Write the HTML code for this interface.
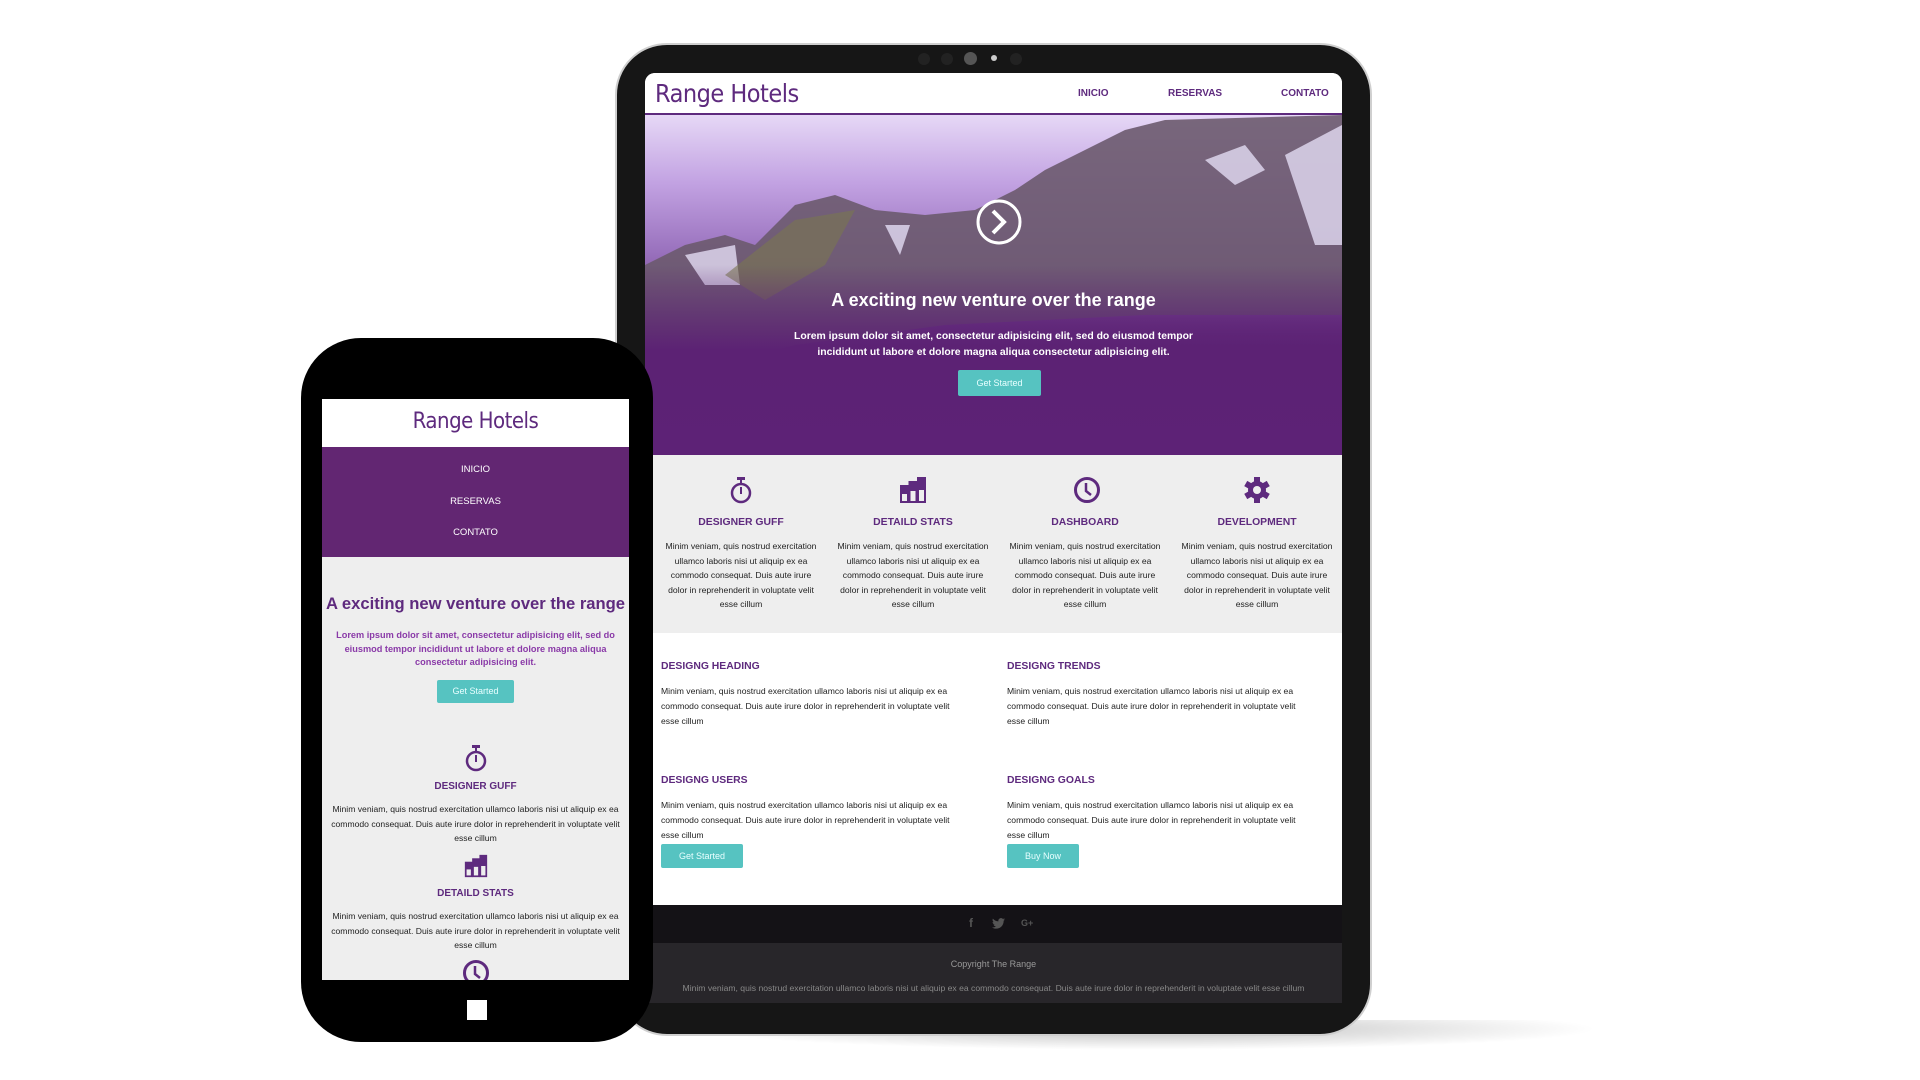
<!DOCTYPE html>
<html><head><meta charset="utf-8"><style>
*{margin:0;padding:0;box-sizing:border-box}
body{width:1920px;height:1080px;background:#fff;position:relative;overflow:hidden;font-family:"Liberation Sans",sans-serif}
.a{position:absolute}
.c{text-align:center}
.p{color:#5e2a7e}
.t{font-size:8.6px;line-height:14.6px;color:#222}
.btn{position:absolute;background:#56c3c1;color:#e8ffff;font-size:9px;text-align:center;border-radius:2px}
.logo{font-family:"Liberation Sans Narrow","DejaVu Sans Condensed","Liberation Sans",sans-serif;color:#5e2a7e;letter-spacing:-0.5px}
</style></head><body>
<div class="a" style="left:700px;top:1020px;width:900px;height:30px;background:radial-gradient(ellipse at 50% 30%,rgba(0,0,0,0.25),rgba(0,0,0,0) 70%)"></div>
<div class="a" style="left:615px;top:43px;width:757px;height:993px;background:#161616;border-radius:52px;border:2px solid #cfcfcf"></div>
<div class="a" style="left:918px;top:53px;width:12px;height:12px;border-radius:6px;background:#222"></div>
<div class="a" style="left:941px;top:53px;width:12px;height:12px;border-radius:6px;background:#222"></div>
<div class="a" style="left:964px;top:52px;width:13px;height:13px;border-radius:7px;background:#555"></div>
<div class="a" style="left:991px;top:55px;width:6px;height:6px;border-radius:3px;background:#ccc"></div>
<div class="a" style="left:1010px;top:53px;width:12px;height:12px;border-radius:6px;background:#222"></div>
<div class="a" style="left:645px;top:73px;width:697px;height:930px;background:#fff;border-radius:10px 10px 0 0;overflow:hidden">
  <div class="a" style="left:0;top:0;width:697px;height:42px;background:#fff;border-bottom:2px solid #5e2a7e"></div>
  <div class="a logo" style="left:10px;top:6px;font-size:25px">Range Hotels</div>
  <div class="a p" style="left:433px;top:15px;font-size:10px;font-weight:bold">INICIO</div>
  <div class="a p" style="left:523px;top:15px;font-size:10px;font-weight:bold">RESERVAS</div>
  <div class="a p" style="left:636px;top:15px;font-size:10px;font-weight:bold">CONTATO</div>
  <div class="a" style="left:0;top:42px;width:697px;height:340px;background:linear-gradient(180deg,#e6d8f6 0%,#c2a2e2 20%,#9a72be 40%,#5a1f72 72%,#5e2378 100%);overflow:hidden">
    <svg class="a" style="left:0;top:0" width="697" height="340" viewBox="0 0 697 340">
      <defs><linearGradient id="g" x1="0" y1="0" x2="0" y2="1"><stop offset="0" stop-color="#5c2274" stop-opacity="0"/><stop offset="0.45" stop-color="#5c2274"/><stop offset="1" stop-color="#5d2276"/></linearGradient></defs>
      <path d="M0 150 L40 130 L80 120 L110 130 L150 90 L190 80 L230 95 L280 100 L330 95 L370 75 L400 55 L440 35 L480 15 L520 5 L697 0 L697 200 L500 200 L300 210 L150 230 L40 260 L0 280Z" fill="#6b5a6e" opacity="0.9"/>
      <path d="M40 140 L90 130 L95 170 L60 170Z M240 110 L265 110 L255 140Z M560 45 L600 30 L620 55 L590 70Z M640 40 L697 10 L697 130 L670 130Z" fill="#e4dcf4" opacity="0.8"/>
      <path d="M80 160 L150 105 L210 95 L180 150 L120 185Z" fill="#7a7650" opacity="0.6"/>
      <rect x="0" y="150" width="697" height="190" fill="url(#g)"/>
      <circle cx="354" cy="107" r="21" fill="none" stroke="#fff" stroke-width="3"/>
      <path d="M348 96 L359 107 L348 118" fill="none" stroke="#fff" stroke-width="4"/>
    </svg>
    <div class="a c" style="left:0;top:175px;width:697px;color:#fff;font-size:18px;font-weight:bold">A exciting new venture over the range</div>
    <div class="a c" style="left:0;top:214px;width:697px;color:#fff;font-size:10.4px;font-weight:bold;line-height:16px">Lorem ipsum dolor sit amet, consectetur adipisicing elit, sed do eiusmod tempor<br>incididunt ut labore et dolore magna aliqua consectetur adipisicing elit.</div>
    <div class="btn" style="left:313px;top:255px;width:83px;height:26px;line-height:26px">Get Started</div>
  </div>
  <div class="a" style="left:0;top:382px;width:697px;height:178px;background:#eee"></div>
  <svg class="a" style="left:84px;top:403px" width="24" height="28" viewBox="0 0 24 28"><rect x="8" y="1" width="8" height="3" fill="#5e2a7e"/><rect x="11" y="3" width="2" height="4" fill="#5e2a7e"/><circle cx="12" cy="17" r="9" fill="none" stroke="#5e2a7e" stroke-width="2.5"/><rect x="11" y="11" width="2" height="7" fill="#5e2a7e"/></svg>
  <svg class="a" style="left:255px;top:403px" width="26" height="28" viewBox="0 0 26 28"><rect x="1" y="10" width="7" height="16" fill="none" stroke="#5e2a7e" stroke-width="2"/><rect x="1" y="10" width="7" height="8" fill="#5e2a7e"/><rect x="9.5" y="6" width="7" height="20" fill="none" stroke="#5e2a7e" stroke-width="2"/><rect x="9.5" y="6" width="7" height="9" fill="#5e2a7e"/><rect x="18" y="2" width="7" height="24" fill="none" stroke="#5e2a7e" stroke-width="2"/><rect x="18" y="2" width="7" height="12" fill="#5e2a7e"/></svg>
  <svg class="a" style="left:428px;top:403px" width="28" height="28" viewBox="0 0 28 28"><circle cx="14" cy="14" r="11.5" fill="none" stroke="#5e2a7e" stroke-width="3"/><path d="M13 7 V15 L18 19" fill="none" stroke="#5e2a7e" stroke-width="2.5"/></svg>
  <svg class="a" style="left:598px;top:403px" width="28" height="28" viewBox="0 0 28 28"><g fill="#5e2a7e"><circle cx="14" cy="14" r="9"/><rect x="11" y="1" width="6" height="26"/><rect x="11" y="1" width="6" height="26" transform="rotate(60 14 14)"/><rect x="11" y="1" width="6" height="26" transform="rotate(120 14 14)"/></g><circle cx="14" cy="14" r="4" fill="#eee"/></svg>
  <div class="a c p" style="left:10px;top:444px;width:172px;font-size:10.4px;font-weight:bold">DESIGNER GUFF</div>
  <div class="a c p" style="left:182px;top:444px;width:172px;font-size:10.4px;font-weight:bold">DETAILD STATS</div>
  <div class="a c p" style="left:354px;top:444px;width:172px;font-size:10.4px;font-weight:bold">DASHBOARD</div>
  <div class="a c p" style="left:526px;top:444px;width:172px;font-size:10.4px;font-weight:bold">DEVELOPMENT</div>
  <div class="a c t" style="left:16px;top:466px;width:160px">Minim veniam, quis nostrud exercitation ullamco laboris nisi ut aliquip ex ea commodo consequat. Duis aute irure dolor in reprehenderit in voluptate velit esse cillum</div>
  <div class="a c t" style="left:188px;top:466px;width:160px">Minim veniam, quis nostrud exercitation ullamco laboris nisi ut aliquip ex ea commodo consequat. Duis aute irure dolor in reprehenderit in voluptate velit esse cillum</div>
  <div class="a c t" style="left:360px;top:466px;width:160px">Minim veniam, quis nostrud exercitation ullamco laboris nisi ut aliquip ex ea commodo consequat. Duis aute irure dolor in reprehenderit in voluptate velit esse cillum</div>
  <div class="a c t" style="left:532px;top:466px;width:160px">Minim veniam, quis nostrud exercitation ullamco laboris nisi ut aliquip ex ea commodo consequat. Duis aute irure dolor in reprehenderit in voluptate velit esse cillum</div>
  <div class="a p" style="left:16px;top:588px;font-size:10.4px;font-weight:bold">DESIGNG HEADING</div>
  <div class="a p" style="left:362px;top:588px;font-size:10.4px;font-weight:bold">DESIGNG TRENDS</div>
  <div class="a t" style="left:16px;top:611px;width:298px;line-height:15px">Minim veniam, quis nostrud exercitation ullamco laboris nisi ut aliquip ex ea commodo consequat. Duis aute irure dolor in reprehenderit in voluptate velit esse cillum</div>
  <div class="a t" style="left:362px;top:611px;width:298px;line-height:15px">Minim veniam, quis nostrud exercitation ullamco laboris nisi ut aliquip ex ea commodo consequat. Duis aute irure dolor in reprehenderit in voluptate velit esse cillum</div>
  <div class="a p" style="left:16px;top:702px;font-size:10.4px;font-weight:bold">DESIGNG USERS</div>
  <div class="a p" style="left:362px;top:702px;font-size:10.4px;font-weight:bold">DESIGNG GOALS</div>
  <div class="a t" style="left:16px;top:725px;width:298px;line-height:15px">Minim veniam, quis nostrud exercitation ullamco laboris nisi ut aliquip ex ea commodo consequat. Duis aute irure dolor in reprehenderit in voluptate velit esse cillum</div>
  <div class="a t" style="left:362px;top:725px;width:298px;line-height:15px">Minim veniam, quis nostrud exercitation ullamco laboris nisi ut aliquip ex ea commodo consequat. Duis aute irure dolor in reprehenderit in voluptate velit esse cillum</div>
  <div class="btn" style="left:16px;top:771px;width:82px;height:24px;line-height:24px">Get Started</div>
  <div class="btn" style="left:362px;top:771px;width:72px;height:24px;line-height:24px">Buy Now</div>
  <div class="a" style="left:0;top:832px;width:697px;height:38px;background:#141216"></div>
  <div class="a" style="left:324px;top:843px;color:#555;font-size:12px;font-weight:bold">f</div>
  <svg class="a" style="left:347px;top:845px" width="13" height="11" viewBox="0 0 24 20"><path d="M24 2.3c-.9.4-1.8.7-2.8.8 1-.6 1.8-1.6 2.2-2.7-1 .6-2 1-3.1 1.2C19.3.6 18 0 16.6 0c-2.7 0-4.9 2.2-4.9 4.9 0 .4 0 .8.1 1.1C7.7 5.8 4.1 3.9 1.7.9c-.4.7-.7 1.6-.7 2.5 0 1.7.9 3.2 2.2 4.1-.8 0-1.6-.2-2.2-.6v.1c0 2.4 1.7 4.4 3.9 4.8-.4.1-.8.2-1.3.2-.3 0-.6 0-.9-.1.6 2 2.4 3.4 4.6 3.4-1.7 1.3-3.8 2.1-6.1 2.1-.4 0-.8 0-1.2-.1 2.2 1.4 4.8 2.2 7.5 2.2 9.1 0 14-7.5 14-14v-.6c1-.7 1.8-1.6 2.5-2.5z" fill="#555"/></svg>
  <div class="a" style="left:376px;top:845px;color:#555;font-size:9px;font-weight:bold">G+</div>
  <div class="a" style="left:0;top:870px;width:697px;height:60px;background:#28262a"></div>
  <div class="a c" style="left:0;top:886px;width:697px;color:#999;font-size:9px">Copyright The Range</div>
  <div class="a c" style="left:0;top:910px;width:697px;color:#888;font-size:8.6px;white-space:nowrap">Minim veniam, quis nostrud exercitation ullamco laboris nisi ut aliquip ex ea commodo consequat. Duis aute irure dolor in reprehenderit in voluptate velit esse cillum</div>
</div>
<div class="a" style="left:301px;top:338px;width:352px;height:704px;background:#000;border-radius:60px"></div>
<div class="a" style="left:322px;top:399px;width:307px;height:581px;background:#eee;overflow:hidden">
  <div class="a" style="left:0;top:0;width:307px;height:48px;background:#fff"></div>
  <div class="a c logo" style="left:0;top:10px;width:307px;font-size:22px">Range Hotels</div>
  <div class="a" style="left:0;top:48px;width:307px;height:110px;background:#622672"></div>
  <div class="a c" style="left:0;top:65px;width:307px;color:#fff;font-size:9.5px">INICIO</div>
  <div class="a c" style="left:0;top:97px;width:307px;color:#fff;font-size:9.5px">RESERVAS</div>
  <div class="a c" style="left:0;top:128px;width:307px;color:#fff;font-size:9.5px">CONTATO</div>
  <div class="a c p" style="left:-5px;top:195px;width:317px;font-size:16.6px;font-weight:bold;white-space:nowrap">A exciting new venture over the range</div>
  <div class="a c" style="left:10px;top:230px;width:287px;color:#8a3aa8;font-size:9.2px;font-weight:bold;line-height:13.5px">Lorem ipsum dolor sit amet, consectetur adipisicing elit, sed do eiusmod tempor incididunt ut labore et dolore magna aliqua consectetur adipisicing elit.</div>
  <div class="btn" style="left:115px;top:281px;width:77px;height:23px;line-height:23px">Get Started</div>
  <svg class="a" style="left:142px;top:345px" width="24" height="28" viewBox="0 0 24 28"><rect x="8" y="1" width="8" height="3" fill="#5e2a7e"/><rect x="11" y="3" width="2" height="4" fill="#5e2a7e"/><circle cx="12" cy="17" r="9" fill="none" stroke="#5e2a7e" stroke-width="2.5"/><rect x="11" y="11" width="2" height="7" fill="#5e2a7e"/></svg>
  <div class="a c p" style="left:0;top:382px;width:307px;font-size:10px;font-weight:bold">DESIGNER GUFF</div>
  <div class="a c t" style="left:8px;top:403px;width:291px">Minim veniam, quis nostrud exercitation ullamco laboris nisi ut aliquip ex ea commodo consequat. Duis aute irure dolor in reprehenderit in voluptate velit esse cillum</div>
  <svg class="a" style="left:141px;top:455px" width="26" height="24" viewBox="0 0 26 28"><rect x="1" y="10" width="7" height="16" fill="none" stroke="#5e2a7e" stroke-width="2"/><rect x="1" y="10" width="7" height="8" fill="#5e2a7e"/><rect x="9.5" y="6" width="7" height="20" fill="none" stroke="#5e2a7e" stroke-width="2"/><rect x="9.5" y="6" width="7" height="9" fill="#5e2a7e"/><rect x="18" y="2" width="7" height="24" fill="none" stroke="#5e2a7e" stroke-width="2"/><rect x="18" y="2" width="7" height="12" fill="#5e2a7e"/></svg>
  <div class="a c p" style="left:0;top:489px;width:307px;font-size:10px;font-weight:bold">DETAILD STATS</div>
  <div class="a c t" style="left:8px;top:510px;width:291px">Minim veniam, quis nostrud exercitation ullamco laboris nisi ut aliquip ex ea commodo consequat. Duis aute irure dolor in reprehenderit in voluptate velit esse cillum</div>
  <svg class="a" style="left:140px;top:560px" width="28" height="28" viewBox="0 0 28 28"><circle cx="14" cy="14" r="11.5" fill="none" stroke="#5e2a7e" stroke-width="3"/><path d="M13 7 V15 L18 19" fill="none" stroke="#5e2a7e" stroke-width="2.5"/></svg>
</div>
<div class="a" style="left:467px;top:1000px;width:20px;height:20px;background:#fff"></div>
</body></html>
